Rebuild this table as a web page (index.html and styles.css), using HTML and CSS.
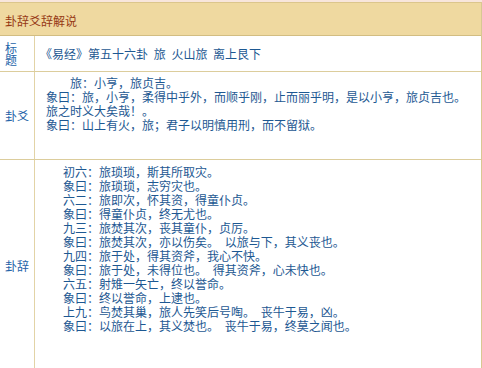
FILE: index.html
```html
<!DOCTYPE html>
<html lang="zh-CN">
<head>
<meta charset="utf-8">
<title>卦辞爻辞解说</title>
<link rel="stylesheet" href="styles.css">
</head>
<body>
<div class="strip"></div>
<div class="panel">
  <div class="head">卦辞爻辞解说</div>
  <div class="row row-title">
    <div class="label">标<br>题</div>
    <div class="cell cell-title">《易经》第五十六卦 旅 火山旅 离上艮下</div>
  </div>
  <div class="row row-yao">
    <div class="label">卦爻</div>
    <div class="cell cell-yao">旅：小亨，旅贞吉。<br>象曰：旅，小亨，柔得中乎外，而顺乎刚，止而丽乎明，是以小亨，旅贞吉也。<br>旅之时义大矣哉！。<br>象曰：山上有火，旅；君子以明慎用刑，而不留狱。</div>
  </div>
  <div class="row row-ci">
    <div class="label">卦辞</div>
    <div class="cell cell-ci">初六：旅琐琐，斯其所取灾。<br>象曰：旅琐琐，志穷灾也。<br>六二：旅即次，怀其资，得童仆贞。<br>象曰：得童仆贞，终无尤也。<br>九三：旅焚其次，丧其童仆，贞厉。<br>象曰：旅焚其次，亦以伤矣。 以旅与下，其义丧也。<br>九四：旅于处，得其资斧，我心不快。<br>象曰：旅于处，未得位也。 得其资斧，心未快也。<br>六五：射雉一矢亡，终以誉命。<br>象曰：终以誉命，上逮也。<br>上九：鸟焚其巢，旅人先笑后号啕。 丧牛于易，凶。<br>象曰：以旅在上，其义焚也。 丧牛于易，终莫之闻也。</div>
  </div>
</div>
</body>
</html>
```
FILE: styles.css
```css
html, body {
  margin: 0;
  padding: 0;
  background: #ffffff;
}

body {
  font-family: "Noto Sans CJK SC", "Noto Sans", sans-serif;
  font-size: 12px;
  width: 482px;
  overflow: hidden;
}

.strip {
  height: 2px;
  background: #f8e6dc;
}

.panel {
  width: 481px;
  border-right: 1px solid #d8c892;
}

.head {
  box-sizing: border-box;
  height: 34px;
  display: flex;
  align-items: center;
  padding: 4px 0 0 5px;
  background: #efd9a0;
  border-top: 1px solid #dcc68c;
  border-bottom: 1px solid #d2bd82;
  color: #963814;
  line-height: 14px;
}

.row {
  display: grid;
  grid-template-columns: 35px 1fr;
  border-bottom: 1px solid #dccd9c;
}

.label {
  display: flex;
  align-items: center;
  padding-left: 5px;
  border-right: 1px solid #e2d3a6;
  color: #2463a8;
  line-height: 12px;
}

.cell {
  color: #1d5892;
  line-height: 14px;
  word-spacing: 3px;
}

.row-title {
  height: 35px;
}

.cell-title {
  display: flex;
  align-items: center;
  padding-left: 5px;
}

.row-yao {
  height: 87px;
}

.cell-yao {
  padding: 4px 0 0 11px;
  text-indent: 24px;
}

.row-ci {
  height: 212px;
}

.cell-ci {
  padding: 5px 0 0 28px;
}
```
